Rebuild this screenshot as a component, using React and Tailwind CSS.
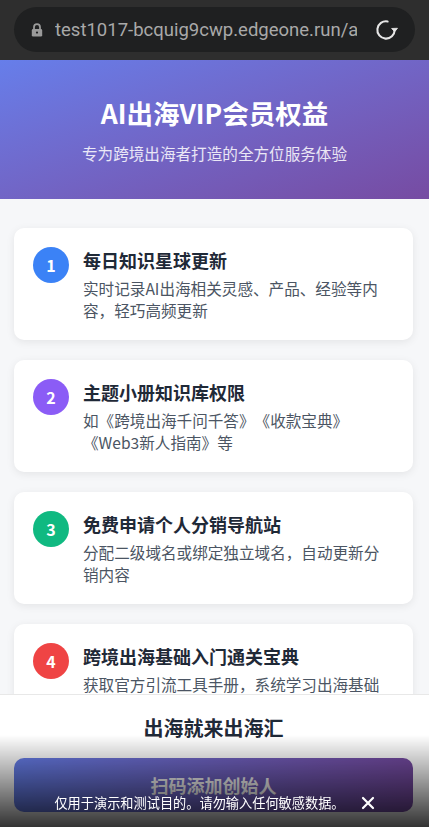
import React from "react";

const items = [
  { n: 1, color: "bg-[#3b82f6]", title: "每日知识星球更新", desc: "实时记录AI出海相关灵感、产品、经验等内容，轻巧高频更新" },
  { n: 2, color: "bg-[#8b5cf6]", title: "主题小册知识库权限", desc: "如《跨境出海千问千答》《收款宝典》《Web3新人指南》等" },
  { n: 3, color: "bg-[#10b981]", title: "免费申请个人分销导航站", desc: "分配二级域名或绑定独立域名，自动更新分销内容" },
  { n: 4, color: "bg-[#ef4444]", title: "跨境出海基础入门通关宝典", desc: "获取官方引流工具手册，系统学习出海基础知识与实操技巧" },
  { n: 5, color: "bg-[#f59e0b]", title: "专属社群交流", desc: "与众多出海从业者一起交流学习，共同成长" },
];

function Lock() {
  return (
    <svg width="12" height="14" viewBox="0 0 12 14" className="shrink-0">
      <path d="M3 6V4.2a3 3 0 0 1 6 0V6" fill="none" stroke="#9a9a9a" strokeWidth="1.8" />
      <rect x="0.8" y="6" width="10.4" height="7.6" rx="1.4" fill="#9a9a9a" />
      <circle cx="6" cy="9.6" r="1.1" fill="#1f2021" />
    </svg>
  );
}

function Reload() {
  return (
    <svg width="26" height="26" viewBox="0 0 24 24" className="shrink-0">
      <path d="M13.5 4.1 A8 8 0 1 0 20 12" fill="none" stroke="#e6e6e6" strokeWidth="1.9" strokeLinecap="round" />
      <path d="M17.2 10.6 L20 13.6 L22.6 10.4 Z" fill="#e6e6e6" stroke="#e6e6e6" strokeWidth="0.8" strokeLinejoin="round" />
    </svg>
  );
}

export default function App() {
  return (
    <div className="min-h-screen bg-[#f6f7f9] font-['Noto_Sans_CJK_SC','Noto_Sans',sans-serif] [text-spacing-trim:space-all]">
      <div className="h-[60px] bg-[#2e2e2e] px-[14px] pt-[7px]">
        <div className="h-[45px] rounded-full bg-[#1f2021] flex items-center pl-[17px] pr-[16px]">
          <Lock />
          <div className="ml-[12px] w-[302px] overflow-hidden whitespace-nowrap text-[18.5px] leading-[24px] text-[#a9a9a9] font-['Roboto',sans-serif]">
            test1017-bcquig9cwp.edgeone.run/about
          </div>
          <div className="ml-auto">
            <Reload />
          </div>
        </div>
      </div>

      <div className="bg-gradient-to-br from-[#667eea] to-[#764ba2] pt-[37px] pb-[35px] flex flex-col items-center text-white">
        <div className="text-[26.5px] leading-[32px] font-bold">AI出海VIP会员权益</div>
        <div className="mt-[13px] text-[15.6px] leading-[22px] text-white/85">专为跨境出海者打造的全方位服务体验</div>
      </div>

      <div className="pl-[14px] pr-[16px] pt-[29px] pb-[160px] flex flex-col gap-[20px]">
        {items.map((it) => (
          <div key={it.n} className="bg-white rounded-[10px] shadow-[0_2px_8px_rgba(0,0,0,0.08)] p-[19px] flex gap-[14px]">
            <div className={`w-9 h-9 rounded-full ${it.color} shrink-0 flex items-center justify-center text-white font-bold text-[16px]`}>
              {it.n}
            </div>
            <div className="flex-1 min-w-0">
              <div className="text-[18px] leading-[26px] font-bold text-[#1f2937]">{it.title}</div>
              <div className="mt-[4px] text-[15.6px] leading-[22px] text-[#4b5563]">{it.desc}</div>
            </div>
          </div>
        ))}
      </div>

      <div className="fixed bottom-0 inset-x-0 h-[133px] bg-white border-t border-[#e8e8e8] pt-[19px] pl-[14px] pr-[16px] flex flex-col">
        <div className="text-center text-[20px] leading-[28px] font-bold text-[#1f2937]">出海就来出海汇</div>
        <div className="mt-[16px] h-[54px] rounded-[10px] bg-gradient-to-r from-[#667eea] to-[#764ba2] flex items-center justify-center text-white text-[18px] font-bold">
          扫码添加创始人
        </div>
      </div>

      <div className="fixed bottom-0 inset-x-0 h-[92px] bg-gradient-to-b from-transparent to-black/80 flex items-end justify-center gap-[16px] pb-[14px]">
        <span className="text-white text-[13.2px] leading-[20px]">仅用于演示和测试目的。请勿输入任何敏感数据。</span>
        <svg width="14" height="14" viewBox="0 0 14 14" className="mb-[3px]">
          <path d="M2 2 L12 12 M12 2 L2 12" stroke="#fff" strokeWidth="2.2" strokeLinecap="round" />
        </svg>
      </div>
    </div>
  );
}
